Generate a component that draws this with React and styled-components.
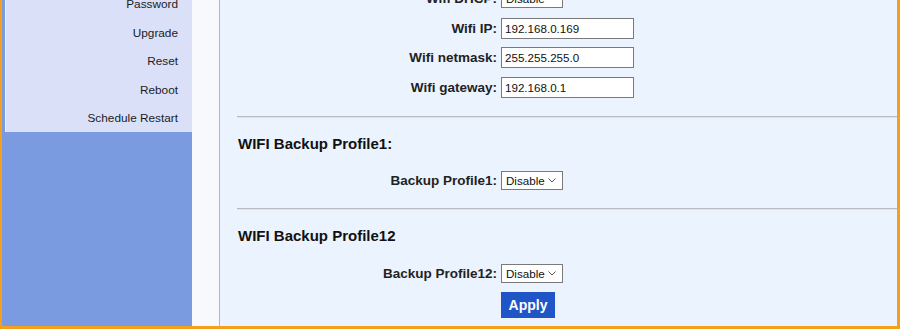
import React from "react";
import styled, { createGlobalStyle } from "styled-components";

const Global = createGlobalStyle`
  html, body { margin: 0; padding: 0; overflow: hidden; background: #ffffff; }
  * { box-sizing: border-box; }
`;

const Frame = styled.div`
  display: flex;
  width: 900px;
  height: 329px;
  border-left: 2px solid #f5a01c;
  border-right: 3px solid #f5a01c;
  border-bottom: 3px solid #f5a01c;
  overflow: hidden;
  font-family: "Liberation Sans", Arial, sans-serif;
`;

const Sidebar = styled.nav`
  width: 190px;
  flex: none;
  background: #7b9be1;
`;

const MenuPanel = styled.ul`
  list-style: none;
  margin: -10.25px 0 0 3px;
  padding: 0;
  background: #dae0f7;
  border-left: 1px solid #eef1fc;
`;

const MenuItem = styled.li`
  height: 28.5px;
  display: flex;
  align-items: center;
  justify-content: flex-end;
  padding-right: 14px;
  font-size: 11.8px;
  color: #1c1c1c;
`;

const Gutter = styled.div`
  width: 28px;
  flex: none;
  background: #f7f9fd;
  border-right: 1px solid #aab7d3;
`;

const Main = styled.main`
  flex: 1;
  background: #ebf4fe;
  padding-left: 17px;
`;

const Rows = styled.div`
  margin-top: ${(p) => p.$top || 0}px;
`;

const Row = styled.div`
  height: 29.5px;
  display: grid;
  grid-template-columns: 260px auto;
  column-gap: 4px;
  align-items: center;
`;

const Label = styled.label`
  text-align: right;
  font-weight: bold;
  font-size: 13.5px;
  color: #222;
`;

const TextInput = styled.div`
  width: 133px;
  height: 21px;
  border: 1px solid #7a7a7a;
  background: #ffffff;
  font-size: 11.6px;
  color: #111;
  padding: 0 3px;
  display: flex;
  align-items: center;
`;

const Select = styled.div`
  width: 62px;
  height: 19px;
  border: 1px solid #7a7a7a;
  background: #ffffff;
  font-size: 11.6px;
  color: #111;
  padding: 0 6px 0 4px;
  display: flex;
  align-items: center;
  justify-content: space-between;
`;

const Divider = styled.hr`
  margin: ${(p) => p.$top}px 0 0 0;
  border: none;
  border-top: 1px solid #b9bdc2;
  border-bottom: 1px solid #dde3ea;
  height: 0;
`;

const Heading = styled.h3`
  margin: ${(p) => p.$top}px 0 0 1px;
  font-size: 15px;
  line-height: 17px;
  font-weight: bold;
  color: #111;
`;

const ApplyButton = styled.button`
  margin: 4px 0 0 264px;
  width: 54px;
  height: 26px;
  border: none;
  background: #1f55c6;
  color: #ffffff;
  font-family: "Liberation Sans", Arial, sans-serif;
  font-weight: bold;
  font-size: 14px;
  padding: 0;
  display: block;
`;

const Chevron = () => (
  <svg width="8" height="5" viewBox="0 0 8 5" fill="none">
    <path d="M0.5 0.5l3.5 3.5L7.5 0.5" stroke="#555" strokeWidth="1" />
  </svg>
);

const Dropdown = ({ value }) => (
  <Select>
    <span>{value}</span>
    <Chevron />
  </Select>
);

export default function App() {
  const menu = ["Password", "Upgrade", "Reset", "Reboot", "Schedule Restart"];
  return (
    <>
      <Global />
      <Frame>
        <Sidebar>
          <MenuPanel>
            {menu.map((m) => (
              <MenuItem key={m}>{m}</MenuItem>
            ))}
          </MenuPanel>
        </Sidebar>
        <Gutter />
        <Main>
          <Rows $top={-16.25}>
            <Row>
              <Label>Wifi DHCP:</Label>
              <Dropdown value="Disable" />
            </Row>
            <Row>
              <Label>Wifi IP:</Label>
              <TextInput>192.168.0.169</TextInput>
            </Row>
            <Row>
              <Label>Wifi netmask:</Label>
              <TextInput>255.255.255.0</TextInput>
            </Row>
            <Row>
              <Label>Wifi gateway:</Label>
              <TextInput>192.168.0.1</TextInput>
            </Row>
          </Rows>
          <Divider $top={14} />
          <Heading $top={17}>WIFI Backup Profile1:</Heading>
          <Rows $top={14}>
            <Row>
              <Label>Backup Profile1:</Label>
              <Dropdown value="Disable" />
            </Row>
          </Rows>
          <Divider $top={13} />
          <Heading $top={17}>WIFI Backup Profile12</Heading>
          <Rows $top={14}>
            <Row>
              <Label>Backup Profile12:</Label>
              <Dropdown value="Disable" />
            </Row>
          </Rows>
          <ApplyButton>Apply</ApplyButton>
        </Main>
      </Frame>
    </>
  );
}
